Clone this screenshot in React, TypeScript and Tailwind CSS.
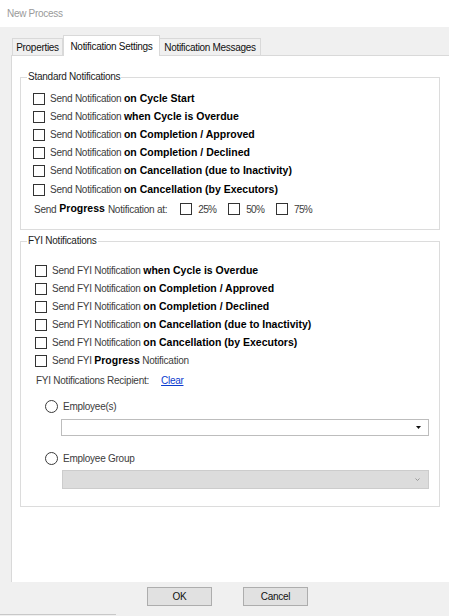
import React from 'react';

const Box = () => (
  <span className="inline-block w-[12px] h-[12px] shrink-0 border border-[#333333] bg-white" />
);

const Radio = () => (
  <span className="inline-block w-[13px] h-[13px] shrink-0 rounded-full border border-[#3a3a3a] bg-white" />
);

const Row = ({ lead, bold, tail, className = '' }: { lead: string; bold: string; tail?: string; className?: string }) => (
  <div className={`flex items-center h-[18px] gap-[5px] ${className}`}>
    <Box />
    <span className="whitespace-nowrap">
      <span className="text-[10px] tracking-[-0.25px] text-[#3c3c3c]">{lead} </span>
      <span className="text-[10.5px] font-bold text-black">{bold}</span>
      {tail && <span className="text-[10px] tracking-[-0.25px] text-[#3c3c3c]"> {tail}</span>}
    </span>
  </div>
);

const Pct = ({ label, className = '' }: { label: string; className?: string }) => (
  <span className={`flex items-center gap-[6px] ${className}`}>
    <Box />
    <span className="tracking-[-0.7px] text-[#3c3c3c]">{label}</span>
  </span>
);

const standard = [
  'on Cycle Start',
  'when Cycle is Overdue',
  'on Completion / Approved',
  'on Completion / Declined',
  'on Cancellation (due to Inactivity)',
];

const fyi = [
  'when Cycle is Overdue',
  'on Completion / Approved',
  'on Completion / Declined',
  'on Cancellation (due to Inactivity)',
  'on Cancellation (by Executors)',
];

export default function App() {
  return (
    <div className="w-[449px] h-[616px] bg-[#f0f0f0] overflow-hidden flex flex-col text-[10px] text-[#222]" style={{ fontFamily: '"Liberation Sans", Arial, sans-serif' }}>
      {/* title bar */}
      <div className="h-[27px] shrink-0 bg-white flex items-center pl-[7px] text-[10px] tracking-[-0.3px] text-[#9a9a9a]">New Process</div>

      {/* tabs */}
      <div className="h-[28px] shrink-0 flex items-end pl-[12px] relative z-10">
        <div className="h-[17px] w-[51px] border border-b-0 border-[#d9d9d9] bg-[#f0f0f0] flex items-center justify-center tracking-[-0.3px] text-[#111]">Properties</div>
        <div className="h-[21px] w-[97px] -mb-[1px] border border-b-0 border-[#d9d9d9] bg-white flex items-start pt-[3px] justify-center tracking-[-0.3px] text-[#111]">Notification Settings</div>
        <div className="h-[17px] w-[101px] border border-b-0 border-l-0 border-[#d9d9d9] bg-[#f0f0f0] flex items-center justify-center tracking-[-0.3px] text-[#111]">Notification Messages</div>
      </div>

      {/* panel */}
      <div className="ml-[11px] h-[527px] shrink-0 bg-white border-t border-l border-[#d9d9d9] pl-[8px] pt-[15px]">
        <fieldset className="w-[420px] border border-[#dcdcdc] pl-[12px] pb-[11px]">
          <legend className="ml-[-6px] px-[1px] text-[10px] tracking-[-0.25px] text-[#222] leading-[12px]">Standard Notifications</legend>
          <div className="pt-[7px]">
            {standard.map((s) => (
              <Row key={s} lead="Send Notification" bold={s} />
            ))}
            <Row lead="Send Notification" bold="on Cancellation (by Executors)" className="mt-[1px]" />
            <div className="flex items-center h-[18px] mt-[1px] pl-[1px] whitespace-nowrap">
              <span className="text-[10px] tracking-[-0.25px] text-[#3c3c3c]">Send </span>
              <span className="text-[10.5px] font-bold text-black ml-[3px]">Progress</span>
              <span className="text-[10px] tracking-[-0.25px] text-[#3c3c3c] ml-[3px]">Notification at:</span>
              <Pct label="25%" className="ml-[13px]" />
              <Pct label="50%" className="ml-[12px]" />
              <Pct label="75%" className="ml-[12px]" />
            </div>
          </div>
        </fieldset>

        <fieldset className="mt-[5px] w-[420px] border border-[#dcdcdc] pl-[14px] pb-[17px]">
          <legend className="ml-[-8px] px-[1px] text-[10px] tracking-[-0.25px] text-[#222] leading-[12px]">FYI Notifications</legend>
          <div className="pt-[15px]">
            {fyi.map((s) => (
              <Row key={s} lead="Send FYI Notification" bold={s} />
            ))}
            <Row lead="Send FYI" bold="Progress" tail="Notification" />
            <div className="flex items-center h-[18px] mt-[1px] pl-[1px] whitespace-nowrap">
              <span className="tracking-[-0.25px] text-[#3c3c3c]">FYI Notifications Recipient:</span>
              <span className="ml-[12px] text-[#0a3ccf] underline tracking-[-0.3px]">Clear</span>
            </div>
            <div className="flex items-center h-[18px] mt-[8px] pl-[10px] gap-[5px]">
              <Radio />
              <span className="tracking-[-0.25px] text-[#3c3c3c]">Employee(s)</span>
            </div>
            <div className="mt-[4px] ml-[26px] w-[368px] h-[17px] border border-[#bdbdbd] bg-white flex items-center justify-end pr-[7px]">
              <svg width="5" height="3" viewBox="0 0 5 3"><path d="M0 0h5L2.5 3z" fill="#111" /></svg>
            </div>
            <div className="flex items-center h-[18px] mt-[13px] pl-[10px] gap-[5px]">
              <Radio />
              <span className="tracking-[-0.25px] text-[#3c3c3c]">Employee Group</span>
            </div>
            <div className="mt-[3px] ml-[27px] w-[367px] h-[19px] border border-[#cccccc] bg-[#dcdcdc] flex items-center justify-end pr-[8px]">
              <svg width="5" height="3" viewBox="0 0 5 3"><path d="M0.5 0.5L2.5 2.5L4.5 0.5" fill="none" stroke="#999999" strokeWidth="1" /></svg>
            </div>
          </div>
        </fieldset>
      </div>

      {/* buttons */}
      <div className="flex pl-[147px] gap-[31px] mt-[5px] shrink-0">
        <button className="w-[65px] h-[19px] border border-[#adadad] bg-[#e1e1e1] text-[10px] tracking-[-0.3px] text-[#111]">OK</button>
        <button className="w-[65px] h-[19px] border border-[#adadad] bg-[#e1e1e1] text-[10px] tracking-[-0.3px] text-[#111]">Cancel</button>
      </div>
      <div className="mt-auto mb-[1px] h-[1px] w-[116px] bg-[#c8c8c8] shrink-0" />
    </div>
  );
}
